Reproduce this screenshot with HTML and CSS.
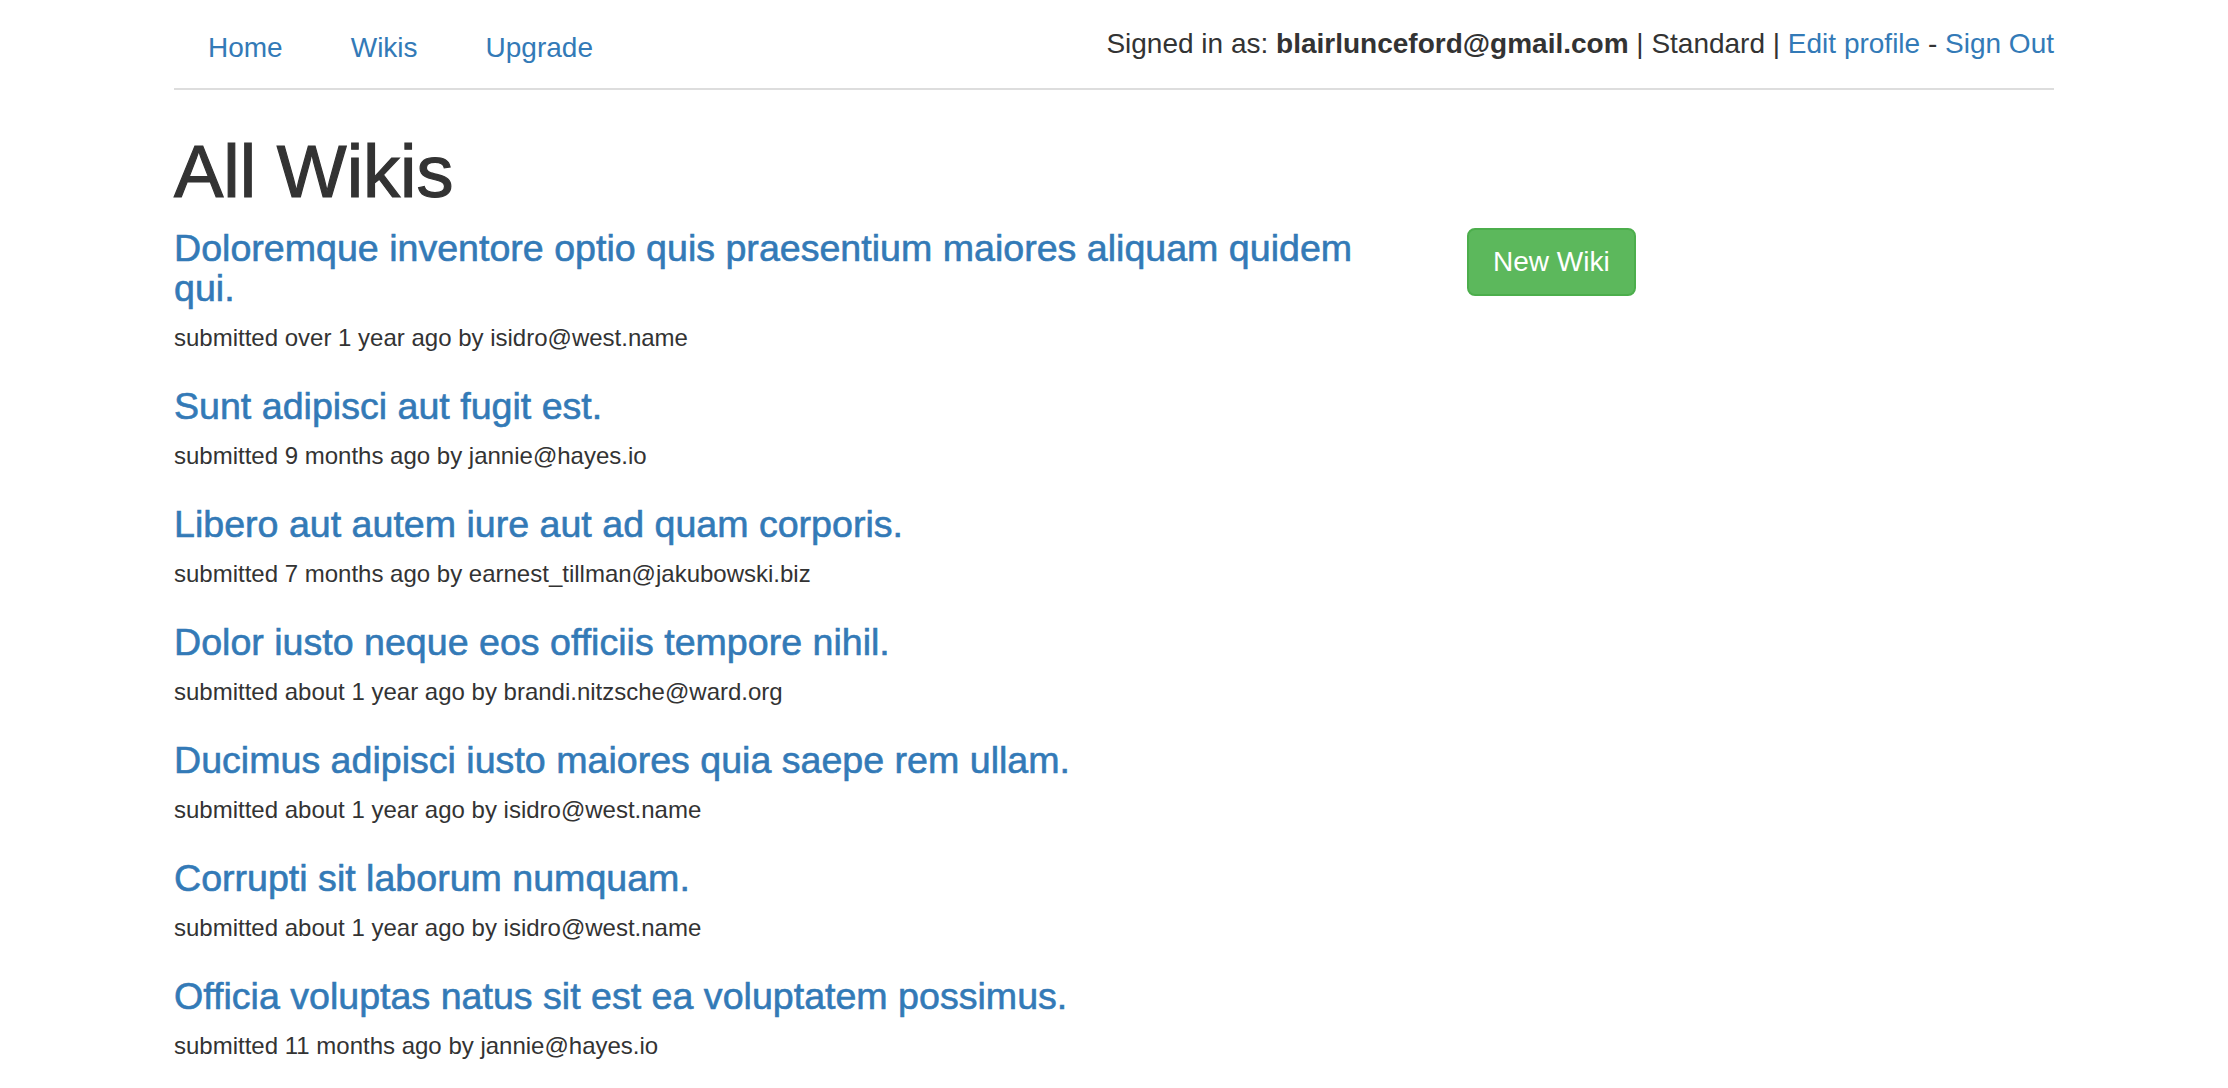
FILE: index.html
```html
<!DOCTYPE html>
<html lang="en">
<head>
<meta charset="utf-8">
<title>All Wikis</title>
<link rel="stylesheet" href="styles.css">
</head>
<body>
<div class="container">
  <header class="topbar">
    <ul class="nav">
      <li><a href="#">Home</a></li>
      <li><a href="#">Wikis</a></li>
      <li><a href="#">Upgrade</a></li>
    </ul>
    <div class="user">Signed in as: <strong>blairlunceford@gmail.com</strong> | Standard | <a href="#">Edit profile</a> - <a href="#">Sign Out</a></div>
  </header>

  <h1 class="page-title">All Wikis</h1>

  <div class="row">
    <div class="wiki-list">
      <div class="wiki">
        <h4 class="wiki-title"><a href="#">Doloremque inventore optio quis praesentium maiores aliquam quidem qui.</a></h4>
        <p class="meta">submitted over 1 year ago by isidro@west.name</p>
      </div>
      <div class="wiki">
        <h4 class="wiki-title"><a href="#">Sunt adipisci aut fugit est.</a></h4>
        <p class="meta">submitted 9 months ago by jannie@hayes.io</p>
      </div>
      <div class="wiki">
        <h4 class="wiki-title"><a href="#">Libero aut autem iure aut ad quam corporis.</a></h4>
        <p class="meta">submitted 7 months ago by earnest_tillman@jakubowski.biz</p>
      </div>
      <div class="wiki">
        <h4 class="wiki-title"><a href="#">Dolor iusto neque eos officiis tempore nihil.</a></h4>
        <p class="meta">submitted about 1 year ago by brandi.nitzsche@ward.org</p>
      </div>
      <div class="wiki">
        <h4 class="wiki-title"><a href="#">Ducimus adipisci iusto maiores quia saepe rem ullam.</a></h4>
        <p class="meta">submitted about 1 year ago by isidro@west.name</p>
      </div>
      <div class="wiki">
        <h4 class="wiki-title"><a href="#">Corrupti sit laborum numquam.</a></h4>
        <p class="meta">submitted about 1 year ago by isidro@west.name</p>
      </div>
      <div class="wiki">
        <h4 class="wiki-title"><a href="#">Officia voluptas natus sit est ea voluptatem possimus.</a></h4>
        <p class="meta">submitted 11 months ago by jannie@hayes.io</p>
      </div>
    </div>
    <div class="side">
      <a href="#" class="btn-success">New Wiki</a>
    </div>
  </div>
</div>
</body>
</html>
```

FILE: styles.css
```css
html, body {
  margin: 0;
  padding: 0;
  background: #fff;
}

body {
  font-family: "Liberation Sans", Arial, Helvetica, sans-serif;
  font-size: 28px;
  line-height: 40px;
  color: #333;
}

a {
  color: #337ab7;
  text-decoration: none;
}

.container {
  width: 1880px;
  margin: 0 auto;
}

.topbar {
  display: flex;
  justify-content: space-between;
  align-items: flex-start;
  border-bottom: 2px solid #ddd;
}

.nav {
  list-style: none;
  margin: 0;
  padding: 8px 0 0 0;
  display: flex;
}

.nav li {
  margin: 0 2px;
}

.nav a {
  display: block;
  padding: 20px 32px;
  line-height: 40px;
}

.user {
  padding-top: 24px;
  line-height: 40px;
  white-space: nowrap;
}

.user strong {
  font-weight: 700;
}

.page-title {
  font-size: 74px;
  line-height: 79px;
  font-weight: 500;
  margin: 42px 0 17px 0;
  color: #333;
  -webkit-text-stroke: 1.2px #333;
}

.row {
  display: grid;
  grid-template-columns: 1233px 587px;
  column-gap: 60px;
  align-items: start;
}

.wiki-list {
  padding-top: 0;
}

.wiki + .wiki {
  margin-top: 31px;
}

.wiki-title {
  font-size: 37.6px;
  line-height: 40px;
  font-weight: 500;
  margin: 0 0 13px 0;
}

.wiki-title a {
  -webkit-text-stroke: 0.6px #337ab7;
}

.meta {
  font-size: 24px;
  line-height: 34px;
  margin: 0;
  color: #333;
}

.side {
  display: flex;
  align-items: flex-start;
}

.btn-success {
  display: inline-block;
  padding: 12px 24px;
  font-size: 28px;
  line-height: 40px;
  color: #fff;
  background-color: #5cb85c;
  border: 2px solid #4cae4c;
  border-radius: 8px;
  white-space: nowrap;
}
```
